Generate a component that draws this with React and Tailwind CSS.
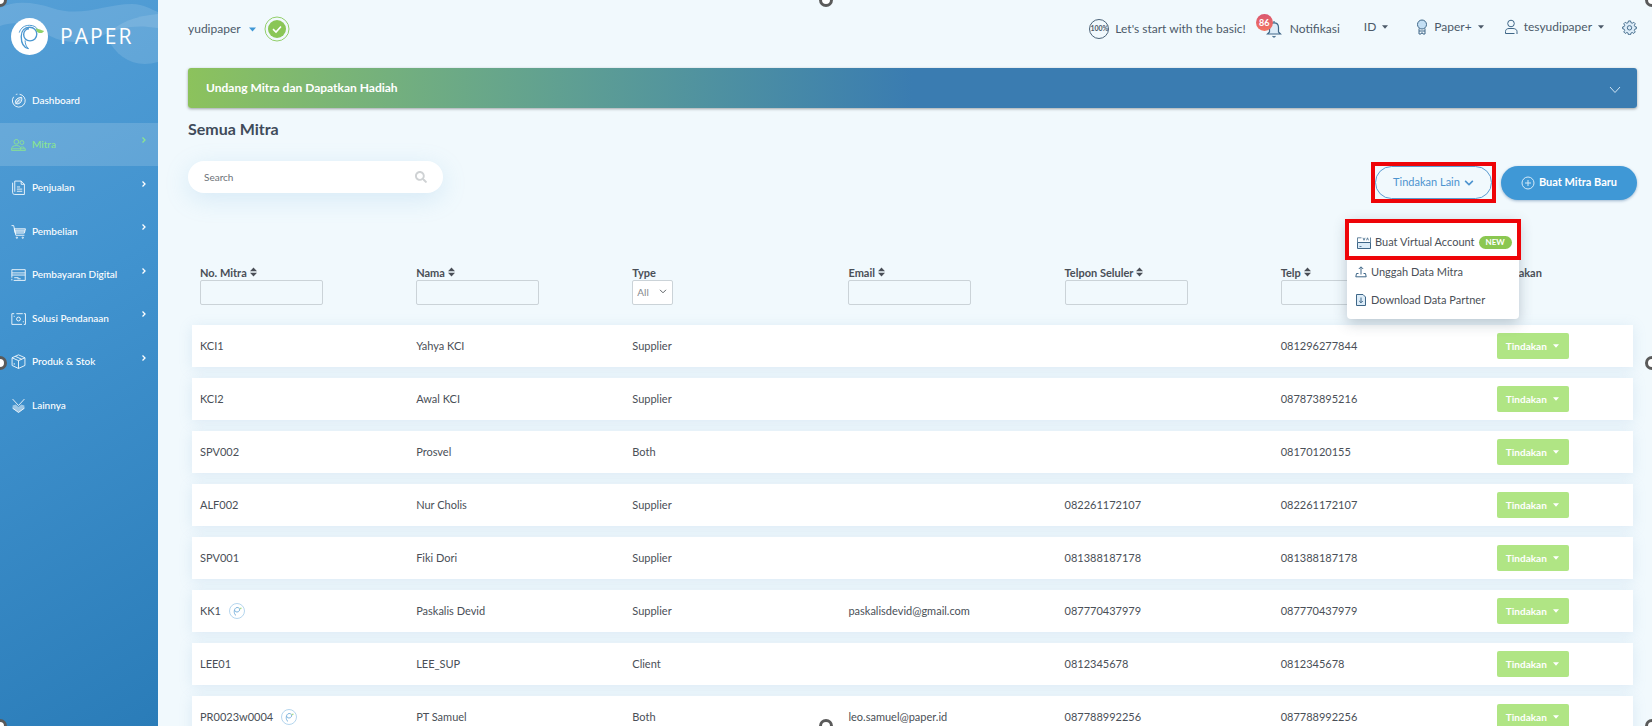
import { useState } from 'react';
import { FaChevronDown, FaSearch } from 'react-icons/fa';

const menu = [
  { label: 'Dashboard', icon: 'dashboard' },
  { label: 'Mitra', icon: 'partner', active: true, sub: true },
  { label: 'Penjualan', icon: 'sales', sub: true },
  { label: 'Pembelian', icon: 'cart', sub: true },
  { label: 'Pembayaran Digital', icon: 'payment', sub: true },
  { label: 'Solusi Pendanaan', icon: 'funding', sub: true },
  { label: 'Produk & Stok', icon: 'box', sub: true },
  { label: 'Lainnya', icon: 'other' },
];

const partners = [
  { no: 'KCI1', name: 'Yahya KCI', type: 'Supplier', email: '', mobile: '', phone: '081296277844' },
  { no: 'KCI2', name: 'Awal KCI', type: 'Supplier', email: '', mobile: '', phone: '087873895216' },
  { no: 'SPV002', name: 'Prosvel', type: 'Both', email: '', mobile: '', phone: '08170120155' },
  { no: 'ALF002', name: 'Nur Cholis', type: 'Supplier', email: '', mobile: '082261172107', phone: '082261172107' },
  { no: 'SPV001', name: 'Fiki Dori', type: 'Supplier', email: '', mobile: '081388187178', phone: '081388187178' },
  { no: 'KK1', linked: true, name: 'Paskalis Devid', type: 'Supplier', email: 'paskalisdevid@gmail.com', mobile: '087770437979', phone: '087770437979' },
  { no: 'LEE01', name: 'LEE_SUP', type: 'Client', email: '', mobile: '0812345678', phone: '0812345678' },
  { no: 'PR0023w0004', linked: true, name: 'PT Samuel', type: 'Both', email: 'leo.samuel@paper.id', mobile: '087788992256', phone: '087788992256' },
];

const handles = [
  'left-0 top-0',
  'left-1/2 top-0',
  'left-full top-0',
  'left-0 top-1/2',
  'left-full top-1/2',
  'left-0 top-full',
  'left-1/2 top-full',
  'left-full top-full',
];

function App() {
  const [search, setSearch] = useState('');
  const [menuOpen, setMenuOpen] = useState(true);

  const rows = partners.filter((p) => p.name.toLowerCase().includes(search.toLowerCase()));

  return (
    <div className="relative flex h-screen overflow-hidden bg-[#f1f9fd] font-['Lato',sans-serif] text-[#4a4f57]">
      <Sidebar />

      <main className="min-w-0 flex-1 pl-[30px] pr-[15px]">
        <Header />

        <button className="flex h-10 w-full items-center justify-between rounded-[3px] bg-linear-to-r from-[#8cc25c] to-[#3a7cb1] to-50% pl-[18px] pr-4 text-xs font-bold text-white shadow-[0_1px_3px_rgba(0,0,0,0.35)]">
          Undang Mitra dan Dapatkan Hadiah
          <svg viewBox="0 0 12 8" className="mt-1 h-2 w-3" fill="none" stroke="#cfe3f3">
            <path d="M1 1l5 5.500 5-5.500" />
          </svg>
        </button>

        <h1 className="mt-[9px] text-base leading-6 font-bold text-[#3f4b5a]">Semua Mitra</h1>

        <div className="mt-5 flex items-start justify-between">
          <label className="flex h-8 w-[255px] items-center rounded-full bg-white px-4 shadow-[0_6px_24px_rgba(120,180,225,0.22)]">
            <input
              value={search}
              onChange={(e) => setSearch(e.target.value)}
              placeholder="Search"
              aria-label="Search"
              className="min-w-0 flex-1 bg-transparent text-[10px] outline-none placeholder:text-[#6d7278]"
            />
            <FaSearch className="size-3 text-[#cfd2d4]" />
          </label>

          <div className="flex items-center gap-[5px] pt-px">
            <div className="relative border-4 border-[#ee0408]">
              <button
                onClick={() => setMenuOpen((prev) => !prev)}
                className="flex h-[33px] w-[117px] items-center justify-center gap-1 rounded-full border border-[#5b9bd0] text-[11px] text-[#4d93cf]"
              >
                Tindakan Lain
                <FaChevronDown className="size-2.5" />
              </button>
              {menuOpen && <ActionMenu />}
            </div>
            <button className="flex h-[34px] w-[136px] items-center justify-center gap-1 rounded-full bg-[#3f98d6] text-[11px] font-bold text-white shadow-[0_1px_3px_rgba(0,60,120,0.35)]">
              <svg viewBox="0 0 14 14" className="size-3.5" fill="none" stroke="#d5eaf8">
                <circle cx="7" cy="7" r="6" />
                <path d="M7 4v6M4 7h6" />
              </svg>
              Buat Mitra Baru
            </button>
          </div>
        </div>

        <div className="mt-[52px] px-1">
          <table className="w-full table-fixed border-separate border-spacing-x-0 border-spacing-y-[11px] text-left text-[11px]">
            <thead>
              <tr>
                <Th label="No. Mitra" width="w-[15%]" filter />
                <Th label="Nama" width="w-[15%]" filter />
                <Th label="Type" width="w-[15%]" select />
                <Th label="Email" width="w-[15%]" filter />
                <Th label="Telpon Seluler" width="w-[15%]" filter />
                <Th label="Telp" width="w-[15%]" filter />
                <Th label="Tindakan" width="w-[10%]" />
              </tr>
            </thead>
            <tbody>
              {rows.map((p) => (
                <tr key={p.no} className="h-[42px] bg-white shadow-[0_2px_14px_rgba(120,165,205,0.18)]">
                  <td className="px-2">
                    <span className="flex items-center gap-2">
                      {p.no}
                      {p.linked && <PaperBadge />}
                    </span>
                  </td>
                  <td className="px-2">{p.name}</td>
                  <td className="px-2">{p.type}</td>
                  <td className="px-2">{p.email}</td>
                  <td className="px-2">{p.mobile}</td>
                  <td className="px-2">{p.phone}</td>
                  <td className="px-2">
                    <button className="flex h-[26px] w-[72px] items-center gap-1.5 rounded-xs bg-[#b0e584] pl-[9px] text-[10px] font-bold text-white">
                      Tindakan
                      <Caret />
                    </button>
                  </td>
                </tr>
              ))}
            </tbody>
          </table>
        </div>
      </main>

      {handles.map((pos) => (
        <span
          key={pos}
          className={`absolute size-3.5 -translate-x-1/2 -translate-y-1/2 rounded-full border-3 border-[#5a5a5a] bg-white ${pos}`}
        />
      ))}
    </div>
  );
}

function Caret({ className = 'h-1 w-1.5' }) {
  return (
    <svg viewBox="0 0 6 4" className={`shrink-0 ${className}`} fill="currentColor">
      <path d="M0 .3h6L3 3.700z" />
    </svg>
  );
}

function Sidebar() {
  return (
    <aside className="relative w-[158px] shrink-0 bg-linear-150 from-[#559fd6] via-[#4193cf] via-40% to-[#2a7cb8]">
      <svg viewBox="0 0 158 66" className="absolute inset-x-0 top-0 w-full" fill="#fff">
        <path opacity=".12" d="M0 26V8C14 0 34 2 52 8c30 10 52-4 80-4 12 0 20 6 26 8v16c-24-4-38 0-52 6-20 8-36 12-56 2C32 24 16 20 0 26z" />
        <path opacity=".12" d="M106 36c12-14 30-20 52-22v48c-22 6-40-2-52-26z" />
      </svg>
      <a href="#home" className="relative flex h-[72px] items-center gap-3 pl-[11px]">
        <svg viewBox="0 0 38 38" className="size-[37px]">
          <circle cx="19" cy="19" r="19" fill="#fff" />
          <g fill="none" stroke="#4b97d0">
            <path strokeWidth="1.400" d="M18 31.500c-5-1-7.500-6-7.500-12.500 0-6 3.500-9.500 8.500-9.500 4.500 0 7.500 3 7.500 7s-3 7-7 7-6.500-3-6.500-6.500 2.500-6 5.500-6" />
            <path d="M8.500 15c1.500-5 5.500-7.500 10.500-7.500 4.500 0 7.500 2 8.500 5M18 31.500c-2.500-2-3.500-5-3.500-8.500" />
          </g>
          <path fill="#8fd16a" d="M25.500 10.500c2 .8 4 1 8.500 2.800-.9 1.500-2.500 2.400-5 2-2-.4-3.200-2-3.500-4.800z" />
        </svg>
        <span className="font-['Open_Sans',sans-serif] text-[21px] leading-7 font-medium tracking-widest text-white">PAPER</span>
      </a>
      <nav className="relative mt-[7px] grid h-[348px] grid-rows-8">
        {menu.map((item) => (
          <a
            key={item.label}
            href={`#${item.icon}`}
            className={`flex items-center gap-1.5 pl-[11px] pr-3 text-[10px] font-medium ${
              item.active ? 'bg-white/15 text-[#8be58f]' : 'text-white'
            }`}
          >
            <MenuIcon name={item.icon} />
            <span className="flex-1 whitespace-nowrap">{item.label}</span>
            {item.sub && (
              <svg viewBox="0 0 4 8" className="mb-2 h-2 w-1" fill="none" stroke="currentColor" strokeWidth="1.300">
                <path d="M.5 1.500L3 4 .5 6.500" />
              </svg>
            )}
          </a>
        ))}
      </nav>
    </aside>
  );
}

const menuPaths = {
  dashboard: (
    <>
      <path d="M2.500 3.500A6 6 0 1 0 8 1.200M4.500 1.500A6 6 0 0 1 6 1.100" />
      <path fillOpacity=".3" fill="currentColor" d="M10 4c.5 3-.5 5.500-3.500 6.200C5 10.400 4 9.500 4 8.500 4.200 5.800 6.500 4.200 10 4z" />
      <path d="M4 10.500L8 6" />
    </>
  ),
  partner: (
    <>
      <circle cx="5" cy="4.500" r="2.200" />
      <circle cx="10.200" cy="5.200" r="1.800" />
      <path d="M.5 12.500V11c0-2 2-3 4.500-3s4 1 4 3v1.500zM9 9.500c2.500-.8 4.500.3 4.500 3H9M1 11h12" />
    </>
  ),
  sales: (
    <>
      <path d="M3.500 11V1H9.500L12.500 4v9.500h-9C2 13.500 1.500 12.500 1.500 11.500V2.500M9.500 1v3h3" />
      <path d="M5.500 6.500h3M5.500 8.500h5M5.500 10.500h5" />
    </>
  ),
  cart: (
    <>
      <path d="M.5 1.500h2l2 9h8" />
      <path fill="currentColor" fillOpacity=".3" d="M3 4.500h10.500l-1 4H4z" />
      <path d="M3.500 6.500H13" />
      <circle cx="5.500" cy="12.800" r=".6" />
      <circle cx="11" cy="12.800" r=".6" />
    </>
  ),
  payment: (
    <>
      <path d="M.8 10V2.500h12.500v10H2.500M.8 5.500h12.500M.8 7.500h12.500M.8 11v1.500" />
      <path d="M3 10h4M6 11h3" />
    </>
  ),
  funding: (
    <>
      <path d="M3 2.500H.8v10h9.500M5 2.500h6M12 2.500h1.500v10H12" />
      <circle cx="7" cy="7.500" r="1.800" />
      <path d="M3 4.500v1M11.500 9.500v1" />
    </>
  ),
  box: (
    <>
      <path d="M7 .8l6 2.700v7.200l-6 2.800-6-2.800V3.500zM1 3.500l6 2.700 6-2.700M7 6.200v7.300M4 2.200l6 2.700" />
      <path d="M3 8.500v1.500" />
    </>
  ),
  other: (
    <>
      <path d="M1.500 1l5.500 6 5.500-6" />
      <path fill="currentColor" fillOpacity=".5" stroke="none" d="M1.500 7l3-1L7 8.500 9.500 6l3 1v2.500l-5.500 4-5.500-4z" />
      <path d="M1.500 9.500l5.500 4 5.500-4" />
    </>
  ),
};

function MenuIcon({ name }) {
  return (
    <svg viewBox="0 0 14 14" className="size-[15px] shrink-0" fill="none" stroke="currentColor" strokeWidth=".8">
      {menuPaths[name]}
    </svg>
  );
}

function Header() {
  return (
    <header className="flex h-[68px] items-center justify-between pb-2.5 text-xs text-[#4c5a69]">
      <div className="flex items-center gap-2">
        <button className="flex items-center gap-2">
          yudipaper
          <Caret className="h-[5px] w-[7px] text-[#3f98d6]" />
        </button>
        <svg viewBox="0 0 26 26" className="size-[26px]" fill="none">
          <circle cx="13" cy="13" r="12" stroke="#93cf6b" />
          <circle cx="13" cy="13" r="9" fill="#8ac656" />
          <path d="M9 13.200l3 2.800 5-5.500" stroke="#fff" strokeWidth="1.600" />
        </svg>
      </div>

      <div className="flex items-center">
        <a href="#start" className="flex items-center gap-1.5">
          <span className="flex size-5 items-center justify-center rounded-full border border-[#4c6479] text-[7px] font-bold">100%</span>
          Let's start with the basic!
        </a>
        <a href="#notifications" className="relative ml-5 flex items-center gap-2">
          <svg viewBox="0 0 16 18" className="h-[18px] w-4" fill="none" stroke="#3f6788" strokeWidth="1.200">
            <path fill="#dcecf8" d="M3.500 12V7.500c0-3 2-4.700 4.500-4.700s4.500 1.700 4.500 4.700V12l2 2h-13z" />
            <path d="M8 1v1.500M6.500 16.200L8 17l1.500-.8" />
          </svg>
          <span className="absolute -left-2.5 -top-1.5 flex size-[17px] items-center justify-center rounded-full bg-linear-to-b from-[#d9566f] to-[#f4735f] text-[9px] font-bold text-white">86</span>
          Notifikasi
        </a>
        <div className="flex items-center pb-1">
          <button className="ml-6 flex items-center gap-1.5">
            ID
            <Caret />
          </button>
          <button className="ml-7 flex items-center gap-1.5">
            <svg viewBox="0 0 12 16" className="h-4 w-3" fill="none" stroke="#3f6788">
              <circle cx="6" cy="5.500" r="4.500" fill="#c3dff4" />
              <path d="M3 9.500V15h2l1-1.500L7 15h2V9.500M3 12h6" />
            </svg>
            Paper+
            <Caret />
          </button>
          <button className="ml-5 flex items-center gap-1.5">
            <svg viewBox="0 0 14 16" className="h-4 w-3.5" fill="none" stroke="#3f6788">
              <circle cx="7" cy="4.500" r="3.300" />
              <path d="M10.500 14.500h-9v-2c0-2 1.500-3 3.500-3h4c2 0 4 1 4 3v2.500" />
            </svg>
            tesyudipaper
            <Caret />
          </button>
          <GearButton />
        </div>
      </div>
    </header>
  );
}

function GearButton() {
  return (
    <button aria-label="Settings" className="ml-[18px]">
      <svg viewBox="0 0 24 24" className="size-[15px]" fill="#dcecf8" stroke="#3f6788" strokeWidth="1.500" strokeLinejoin="round">
        <path d="M10.300 1.500h3.400l.6 2.700 2.100.9 2.400-1.500 2.400 2.400-1.500 2.400.9 2.100 2.400.6v2.900l-2.400.6-.9 2.100 1.500 2.400-2.400 2.400-2.400-1.500-2.100.9-.6 2.700h-3.400l-.6-2.700-2.100-.9-2.400 1.500L2.800 19.100l1.500-2.400-.9-2.100-2.400-.6v-2.900l2.400-.6.9-2.100L2.800 6l2.400-2.400 2.400 1.500 2.100-.9z" />
        <circle cx="12" cy="12.500" r="3.500" />
      </svg>
    </button>
  );
}

function ActionMenu() {
  return (
    <div className="absolute -right-[29px] top-[53px] z-10 w-44">
      <div className="mx-0.5 rounded-sm bg-white pb-[5px] text-[11px] shadow-[0_4px_14px_rgba(60,80,100,0.3)]">
        <button className="-mx-0.5 flex h-[41px] w-44 items-center gap-1 border-4 border-[#ee0408] pl-2 pt-1.5">
          <svg viewBox="0 0 14 12" className="h-3 w-3.5 shrink-0" fill="none" stroke="#3f6788">
            <path fill="#dcecf8" d="M.5 5.500h13v6H.5z" />
            <path strokeWidth=".8" d="M4.500.8h-4v4.700M13.500.5v5M6 .8l1 2.500L8 .8M9.500 3.300l1-2.500 1 2.500M2.500 9.500h2" />
          </svg>
          <span className="whitespace-nowrap">Buat Virtual Account</span>
          <span className="rounded-full bg-[#8bc751] px-[7px] text-[8px] leading-[13px] font-bold text-white">NEW</span>
        </button>
        <div className="-mt-0.5">
          <button className="flex h-7 items-center gap-1 pl-2">
            <svg viewBox="0 0 12 12" className="size-3" fill="none" stroke="#3f6788">
              <path d="M6 8.500V1M3.800 3L6 .8 8.200 3" />
              <path d="M3.500 7.500h-2L.8 10.800h10.400l-.7-3.300h-2" />
            </svg>
            Unggah Data Mitra
          </button>
          <button className="flex h-7 items-center gap-1 pl-2">
            <svg viewBox="0 0 12 12" className="size-3" fill="none" stroke="#3f6788">
              <path fill="#dcecf8" d="M1.500.5H8l2.500 2.500v8.500h-9z" />
              <path d="M6 3.500v5M4.200 7L6 8.800 7.800 7" />
            </svg>
            Download Data Partner
          </button>
        </div>
      </div>
    </div>
  );
}

function PaperBadge() {
  return (
    <svg viewBox="0 0 16 16" className="size-4" fill="none">
      <circle cx="8" cy="8" r="7.500" stroke="#b5d6ee" />
      <path d="M7 12.500C4.500 11 4.500 5 8 4.500c3.500-.3 3.500 4.500 0 4.500-1.500 0-2.300-.8-2.300-2" stroke="#7fb5de" />
      <path d="M10.500 4.800h2.300c0 1-1 1.700-2 1.400z" fill="#a9dc8c" />
    </svg>
  );
}

function Th({ label, width, filter, select }) {
  return (
    <th className={`px-2 pb-[9px] align-top font-bold ${width}`}>
      <span className="flex items-center gap-[3px] leading-[14px]">
        {label}
        {filter && (
          <svg viewBox="0 0 7 10" className="mb-0.5 h-2.5 w-[7px]" fill="currentColor">
            <path d="M0 4.200L3.500.5 7 4.200zM0 5.800h7L3.500 9.500z" />
          </svg>
        )}
      </span>
      {filter && (
        <input
          aria-label={label}
          className="block h-[25px] w-[123px] rounded-xs border border-[#cbd3d8] bg-transparent px-2 font-normal outline-none"
        />
      )}
      {select && (
        <span className="relative block w-[41px]">
          <select
            aria-label={label}
            className="block h-[25px] w-full appearance-none rounded-xs border border-[#cbd3d8] bg-white pl-1 text-[10px] font-normal text-[#85898d]"
          >
            <option>All</option>
            <option>Supplier</option>
            <option>Client</option>
            <option>Both</option>
          </select>
          <svg viewBox="0 0 8 5" className="pointer-events-none absolute right-1.5 top-[9px] h-[5px] w-2" fill="none" stroke="#5d6266">
            <path d="M1 .8l3 3 3-3" />
          </svg>
        </span>
      )}
    </th>
  );
}

export default App;
